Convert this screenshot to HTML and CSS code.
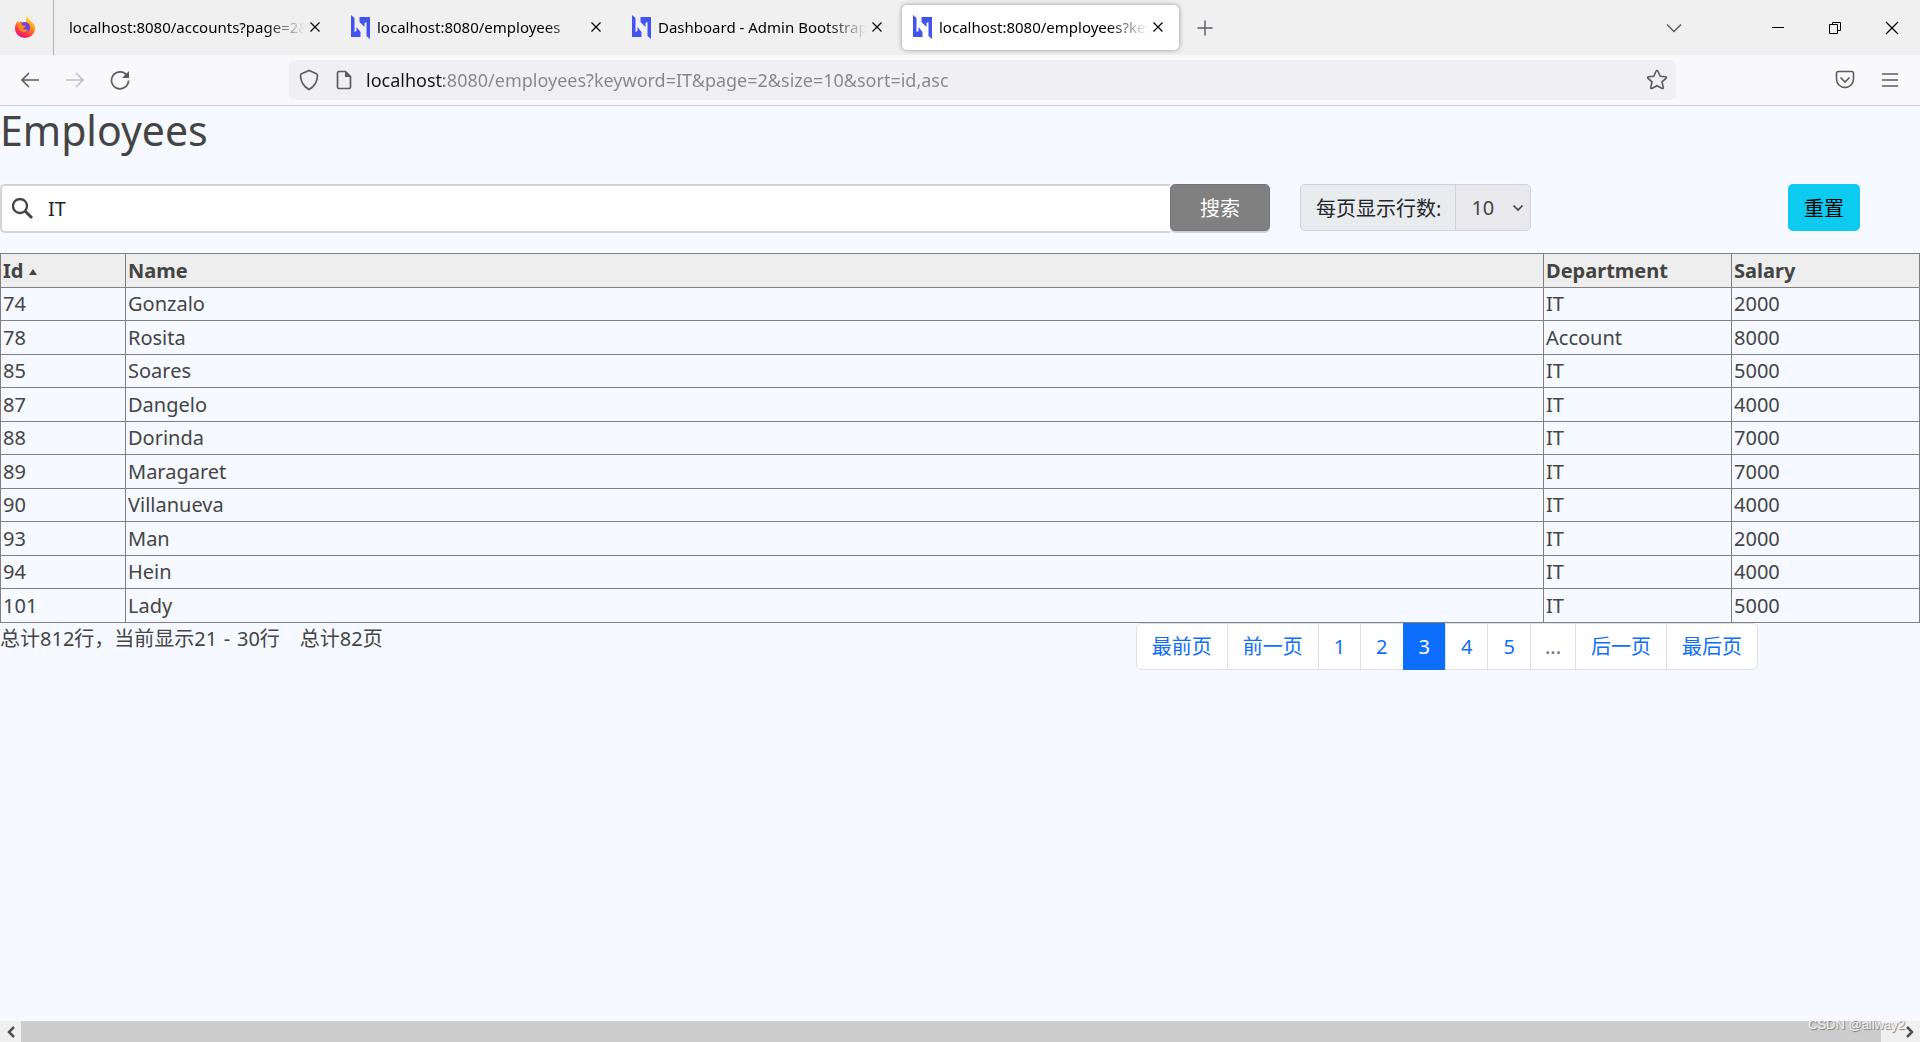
FILE: index.html
```html
<!DOCTYPE html>
<html lang="zh-CN">
<head>
<meta charset="utf-8">
<title>Employees</title>
<link rel="stylesheet" href="styles.css">
</head>
<body>
<svg width="0" height="0" class="sprites" aria-hidden="true">
  <symbol id="close" viewBox="0 0 12 12"><path d="M1.5 1.5l9 9M10.5 1.5l-9 9" fill="none" stroke="currentColor" stroke-width="1.2"/></symbol>
  <symbol id="logo" viewBox="0 0 20 24"><path d="M1 0l3.500 3v14l2-1v-4l4 5v5H1zM20 24l-3.500-3V7l-2 1v4l-5-5V2H20z" fill="#4154f1"/></symbol>
</svg>
<header class="browser">
  <div class="tabstrip">
    <div class="home-tab">
      <svg width="20" height="24" viewBox="0 0 20 24" aria-label="Firefox">
        <defs>
          <linearGradient id="fire" x1="0.8" y1="0" x2="0.3" y2="1"><stop offset="0" stop-color="#fff44f"/><stop offset="0.4" stop-color="#ff980e"/><stop offset="0.75" stop-color="#ff3647"/><stop offset="1" stop-color="#e31587"/></linearGradient>
        </defs>
        <path d="M12 1c1 2 2 3 4 5 2 2 4 4 4 8a10 9 0 0 1-20 0c0-4 1-6 3-8l1 2 2-2 1 2c2-1 3-1 4 0 0-3 0-5 1-7z" fill="url(#fire)"/>
        <path d="M6 8c3-2 8-1 9 3 1 5-3 7-6 6-3 0-5-3-4-5l3 1 3-2-4-1z" fill="#7542e5"/>
        <path d="M2 8l4 0 1 3 3 0-2 3 5 1c-2 3-7 3-9-1z" fill="#ff8a16"/>
      </svg>
    </div>
    <div class="tabs">
      <div class="tab"><span class="tab-title">localhost:8080/accounts?page=2&amp;size=10</span><button class="tab-close" aria-label="Close tab"><svg width="12" height="12"><use href="#close"/></svg></button></div>
      <div class="tab"><svg class="favicon" width="20" height="24"><use href="#logo"/></svg><span class="tab-title">localhost:8080/employees</span><button class="tab-close" aria-label="Close tab"><svg width="12" height="12"><use href="#close"/></svg></button></div>
      <div class="tab"><svg class="favicon" width="20" height="24"><use href="#logo"/></svg><span class="tab-title">Dashboard - Admin Bootstrap Template</span><button class="tab-close" aria-label="Close tab"><svg width="12" height="12"><use href="#close"/></svg></button></div>
      <div class="tab active"><svg class="favicon" width="20" height="24"><use href="#logo"/></svg><span class="tab-title">localhost:8080/employees?keyword=IT</span><button class="tab-close" aria-label="Close tab"><svg width="12" height="12"><use href="#close"/></svg></button></div>
    </div>
    <button class="new-tab" aria-label="New tab"><svg width="16" height="16" viewBox="0 0 16 16"><path d="M8 0.5v15M0.5 8h15" stroke="#5b5b66" stroke-width="1.4"/></svg></button>
    <div class="window-controls">
      <button class="all-tabs" aria-label="List all tabs"><svg width="16" height="10" viewBox="0 0 16 10"><path d="M1 1.5l7 7 7-7" fill="none" stroke="#5b5b66" stroke-width="1.5"/></svg></button>
      <button aria-label="Minimize"><svg width="14" height="14" viewBox="0 0 14 14"><path d="M1 6.5h12" stroke="#000"/></svg></button>
      <button aria-label="Restore"><svg width="14" height="14" viewBox="0 0 14 14"><path d="M1.500 3.500h8v9h-8zM4.500 3.500v-2h8v8h-3" fill="none" stroke="#000"/></svg></button>
      <button aria-label="Close"><svg width="14" height="14" viewBox="0 0 14 14"><path d="M1 1l12 12M13 1l-12 12" stroke="#000" stroke-width="1.2"/></svg></button>
    </div>
  </div>
  <div class="navbar">
    <div class="nav-buttons">
      <button aria-label="Back"><svg width="20" height="20" viewBox="0 0 20 20"><path d="M19 10H2M9 3l-7 7 7 7" fill="none" stroke="#5b5b66" stroke-width="1.6"/></svg></button>
      <button aria-label="Forward" disabled><svg width="20" height="20" viewBox="0 0 20 20"><path d="M1 10h17M11 3l7 7-7 7" fill="none" stroke="#bebec3" stroke-width="1.6"/></svg></button>
      <button aria-label="Reload"><svg width="20" height="20" viewBox="0 0 20 20"><path d="M17 5.500A8.500 8.500 0 1 0 18.500 10.500" fill="none" stroke="#5b5b66" stroke-width="1.7"/><path d="M19 1v7h-7z" fill="#5b5b66"/></svg></button>
    </div>
    <div class="urlbar">
      <svg width="20" height="22" viewBox="0 0 20 22"><path d="M10 1.500l7.500 3.200c1 .4 1 1 1 1.800-.2 6-3 11-8.500 14C4.500 17.500 1.700 12.500 1.500 6.500c0-.8 0-1.400 1-1.800z" fill="none" stroke="#5b5b66" stroke-width="1.700"/></svg>
      <svg width="16" height="20" viewBox="0 0 16 20"><path d="M3 1.500h6.500l5 5V17q0 1.500-1.500 1.500H3Q1.500 18.500 1.500 17V3Q1.500 1.500 3 1.500z" fill="none" stroke="#5b5b66" stroke-width="1.700"/><path d="M9 1v6h6z" fill="#5b5b66"/></svg>
      <input class="url" type="text" aria-label="Address" value="localhost:8080/employees?keyword=IT&amp;page=2&amp;size=10&amp;sort=id,asc">
      <button aria-label="Bookmark"><svg width="22" height="22" viewBox="0 0 22 22"><path d="M11 1.500q.7 0 1 .8l2.200 5 5.500.5q1.200.4.500 1.300l-4.200 3.700 1.300 5.700q0 1.300-1.200 1L11 16.700l-5.100 2.800q-1.200.3-1.200-1L6 12.800 1.800 9.100q-.7-.9.500-1.300l5.500-.5 2.200-5q.3-.8 1-.8z" fill="none" stroke="#5b5b66" stroke-width="1.600"/></svg></button>
    </div>
    <div class="nav-tools">
      <button aria-label="Pocket"><svg width="20" height="20" viewBox="0 0 20 20"><path d="M3.500 1.500h13q2 0 2 2V9a8.500 8.500 0 0 1-17 0V3.500q0-2 2-2zM5.500 7.500L10 12l4.500-4.500" fill="none" stroke="#5b5b66" stroke-width="1.600"/></svg></button>
      <button aria-label="Menu"><svg width="16" height="16" viewBox="0 0 16 16"><path d="M0 2h16M0 8h16M0 14h16" stroke="#5b5b66" stroke-width="1.500"/></svg></button>
    </div>
  </div>
</header>
<main>
  <h1>Employees</h1>
  <form class="filters">
    <div class="search">
      <label class="search-box"><svg width="22" height="22" viewBox="0 0 22 22"><circle cx="8" cy="8" r="7" fill="none" stroke="#444" stroke-width="2.300"/><path d="M13 13l7 7" stroke="#444" stroke-width="3"/></svg>
        <input type="text" name="keyword" aria-label="搜索" value="IT"></label>
      <button type="button" class="search-button">搜索</button>
    </div>
    <div class="page-size">
      <label for="size">每页显示行数:</label>
      <div class="select-wrap"><select id="size"><option>10</option><option>20</option></select><svg width="12" height="8" viewBox="0 0 12 8"><path d="M1.500 1.500L6 6l4.500-4.500" fill="none" stroke="#444" stroke-width="1.700"/></svg></div>
    </div>
    <div class="reset"><button type="button">重置</button></div>
  </form>
  <table>
    <colgroup><col class="col-id"><col><col class="col-side"><col class="col-side"></colgroup>
    <thead><tr><th>Id<svg width="8" height="6" viewBox="0 0 8 6"><path d="M0 6l4-6 4 6z" fill="#444"/></svg></th><th>Name</th><th>Department</th><th>Salary</th></tr></thead>
    <tbody>
      <tr><td>74</td><td>Gonzalo</td><td>IT</td><td>2000</td></tr>
      <tr><td>78</td><td>Rosita</td><td>Account</td><td>8000</td></tr>
      <tr><td>85</td><td>Soares</td><td>IT</td><td>5000</td></tr>
      <tr><td>87</td><td>Dangelo</td><td>IT</td><td>4000</td></tr>
      <tr><td>88</td><td>Dorinda</td><td>IT</td><td>7000</td></tr>
      <tr><td>89</td><td>Maragaret</td><td>IT</td><td>7000</td></tr>
      <tr><td>90</td><td>Villanueva</td><td>IT</td><td>4000</td></tr>
      <tr><td>93</td><td>Man</td><td>IT</td><td>2000</td></tr>
      <tr><td>94</td><td>Hein</td><td>IT</td><td>4000</td></tr>
      <tr><td>101</td><td>Lady</td><td>IT</td><td>5000</td></tr>
    </tbody>
  </table>
  <div class="table-footer">
    <p>总计812行，当前显示21&#8196;-&#8196;30行&#8196;&#8196;&#8196;总计82页</p>
    <nav aria-label="Pages">
      <ul class="pagination">
        <li><a href="#">最前页</a></li>
        <li><a href="#">前一页</a></li>
        <li><a href="#">1</a></li>
        <li><a href="#">2</a></li>
        <li class="current"><a href="#" aria-current="page">3</a></li>
        <li><a href="#">4</a></li>
        <li><a href="#">5</a></li>
        <li class="gap"><span>...</span></li>
        <li><a href="#">后一页</a></li>
        <li><a href="#">最后页</a></li>
      </ul>
    </nav>
  </div>
</main>
<footer class="scrollbar">
  <button aria-label="Scroll left"><svg width="10" height="12" viewBox="0 0 10 12"><path d="M8 1L3 6l5 5" fill="none" stroke="#505050" stroke-width="2.500"/></svg></button>
  <div class="thumb"></div>
  <button aria-label="Scroll right"><svg width="10" height="12" viewBox="0 0 10 12"><path d="M2 1l5 5-5 5" fill="none" stroke="#505050" stroke-width="2.500"/></svg></button>
  <span class="watermark">CSDN @allway2</span>
</footer>
</body>
</html>
```
FILE: styles.css
```css
* { box-sizing: border-box; }
body {
  margin: 0;
  min-height: 100vh;
  display: flex;
  flex-direction: column;
  background: #f6f9ff;
  color: #444;
  font: 20px/30px "Noto Sans", "Noto Sans CJK SC", sans-serif;
}
button, input, select { font: inherit; color: inherit; margin: 0; }
button { border: 0; padding: 0; background: none; }
svg { display: block; flex: none; }
.sprites { position: absolute; }

/* Browser frame */
.browser button { display: flex; align-items: center; justify-content: center; }
.tabstrip { display: flex; height: 55px; background: #f0f0f0; color: #000; font-size: 15px; }
.home-tab { width: 54px; display: flex; align-items: center; justify-content: center; padding: 0 4px 2px 0; border-right: 1px solid #b0b0b0; }
.tabs { display: flex; gap: 4px; padding: 5px 0 5px 5px; }
.tab { width: 277px; display: flex; align-items: center; padding: 0 11px 1px 10px; border-radius: 5px; }
.tab.active { background: #fff; box-shadow: 0 0 5px rgba(0, 0, 0, .4); }
.favicon { margin-right: 7px; }
.tab-title { flex: 1; min-width: 0; overflow: hidden; white-space: nowrap; mask-image: linear-gradient(to left, transparent, #000 40px); }
.tab-close { width: 20px; height: 30px; }
.new-tab { width: 52px; }
.window-controls { display: flex; margin-left: auto; }
.window-controls button { width: 57px; }
.window-controls .all-tabs { width: 50px; margin-right: 50px; }
.navbar { display: flex; align-items: center; height: 51px; background: #f9f9fb; border-bottom: 1px solid #ccccd0; }
.nav-buttons { display: flex; gap: 25px; width: 289px; padding-left: 20px; }
.urlbar { flex: 1; height: 40px; display: flex; align-items: center; padding: 0 8px 0 10px; background: #f0f0f4; border-radius: 5px; }
.urlbar > svg + svg { margin-left: 17px; }
.url {
  flex: 1;
  border: 0;
  padding: 0;
  margin-left: 14px;
  font-size: 18px;
  outline: 0;
  color: transparent;
  background: linear-gradient(to right, #15141a 78px, #85858b 78px);
  background-clip: text;
}
.nav-tools { display: flex; justify-content: flex-end; align-items: center; gap: 27px; width: 244px; padding-right: 22px; }

/* Page content */
main { flex: 1; }
h1 { margin: 0 0 30px; font-size: 41px; line-height: 48px; font-weight: 400; }
.filters { display: flex; align-items: flex-start; height: 49px; margin-bottom: 20px; }
.search { width: 1270px; max-width: 67%; display: flex; align-items: flex-start; height: 49px; border-radius: 5px; }
.search-box { flex: 1; height: 49px; display: flex; align-items: center; padding-left: 10px; background: #fff; border: 2px solid #d3d3d3; border-right: 0; border-radius: 5px 0 0 5px; }
.search-box input { flex: 1; margin-left: 14px; border: 0; padding: 0; outline: 0; background: none; color: #212529; }
.search-button { width: 100px; height: 47px; padding-top: 2px; border: 1px solid #6c757d; border-radius: 5px; background: #808080; color: #fff; box-shadow: 0 2px #d3d3d3; }
.page-size { display: flex; height: 47px; margin-left: 30px; border: 1px solid #ced4da; border-radius: 5px; background: #e9ecef; color: #212529; overflow: hidden; }
.page-size label { padding: 9px 14px 6px 15px; white-space: nowrap; }
.select-wrap { display: flex; align-items: center; width: 75px; padding-right: 6px; border-left: 1px solid #ced4da; background: #e9e9ed; color: #444; }
.select-wrap select { flex: 1; min-width: 0; border: 0; padding: 0 0 0 15px; appearance: none; background: none; }
.reset { margin-left: auto; padding-right: 60px; }
.reset button { width: 72px; height: 47px; padding-top: 2px; border-radius: 5px; background: #0dcaf0; color: #000; }

table { width: 100%; table-layout: fixed; border-collapse: collapse; }
.col-id { width: 125px; }
.col-side { width: 188px; }
th, td { height: 33px; padding: 1px 1px 1px 2px; border: 1px solid #808080; text-align: left; }
th, tr:nth-child(even) td { height: 34px; }
th { background: #eee; }
th svg { display: inline-block; vertical-align: 3px; margin-left: 6px; }

.table-footer { display: flex; justify-content: space-between; }
.table-footer p { margin: 0; padding-top: 1px; }
.table-footer nav { padding-right: 162px; }
.pagination { display: flex; margin: 0; padding: 0; list-style: none; border: 1px solid #dee2e6; border-radius: 5px; background: #fff; }
.pagination li + li { border-left: 1px solid #dee2e6; }
.pagination a, .pagination span { display: block; padding: 8px 15px 7px; color: #0d6efd; text-decoration: none; }
.pagination .gap span { padding: 8px 14px 7px; color: #6c757d; }
.pagination .current { margin: -1px 0; padding: 1px 0; border-color: #0d6efd; background: #0d6efd; }
.pagination .current a { color: #fff; }

.scrollbar { position: relative; display: flex; height: 21px; background: #f0f0f0; }
.scrollbar button { width: 21px; display: flex; align-items: center; justify-content: center; }
.thumb { flex: 1; margin-right: 18px; background: #cdcdcd; }
.watermark { position: absolute; right: 15px; bottom: 8px; font: 13px/18px "Liberation Sans", sans-serif; color: #f4f4f4; text-shadow: 1px 1px 1px #777; }
```
